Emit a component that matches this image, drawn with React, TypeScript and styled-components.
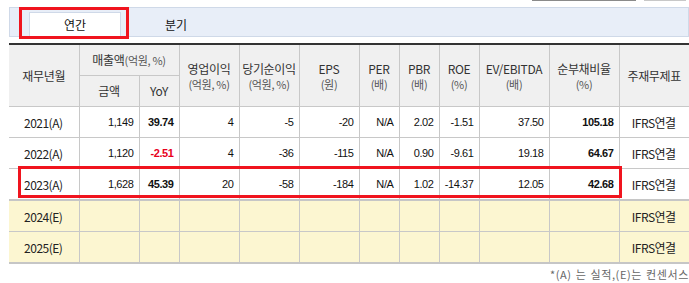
import React from "react";
import styled, { createGlobalStyle } from "styled-components";

const Global = createGlobalStyle`
  html, body { margin: 0; padding: 0; background: #fff; }
  body { font-family: "Noto Sans CJK KR", "Liberation Sans", sans-serif; color: #222; }
`;

const Page = styled.div`
  width: 689px;
  height: 283px;
  overflow: hidden;
  padding-left: 9px;
  box-sizing: border-box;
`;

const TopStrip = styled.div`
  height: 7px;
  display: flex;
  align-items: flex-start;
`;

const Stub = styled.div<{ $left: number; $width: number; $dark?: boolean }>`
  margin-left: ${(p) => p.$left}px;
  width: ${(p) => p.$width}px;
  height: 1px;
  box-sizing: border-box;
  border: 1px solid ${(p) => (p.$dark ? "#8a8a8a" : "#c8c8c8")};
  border-top: none;
  background: #f4f4f4;
`;

const TabBar = styled.div`
  width: 680px;
  height: 30px;
  box-sizing: border-box;
  background: #e8eef8;
  border: 1px solid #cfd9e8;
  display: flex;
  align-items: flex-end;
  padding-left: 19px;
`;

const Tab = styled.div<{ $active?: boolean }>`
  position: relative;
  width: 92px;
  height: 24px;
  box-sizing: border-box;
  display: flex;
  align-items: center;
  justify-content: center;
  font-size: 12px;
  color: #111;
  background: ${(p) => (p.$active ? "#fff" : "transparent")};
  border: 1px solid ${(p) => (p.$active ? "#cfd9e8" : "transparent")};
  border-bottom: none;
  margin-right: 9px;
`;

const Highlight = styled.div`
  position: absolute;
  pointer-events: none;
  border: 3px solid #f0141e;
  box-sizing: border-box;
`;

const TableWrap = styled.div`
  position: relative;
  margin-top: 6px;
  width: 680px;
`;

const Table = styled.table`
  border-collapse: collapse;
  table-layout: fixed;
  width: 680px;
  border-top: 2px solid #333;
  border-bottom: 2px solid #c6c6c6;
`;

const Th = styled.th`
  background: #f0f0f0;
  border: 1px solid #c8c8c8;
  font-weight: normal;
  font-size: 12px;
  color: #333;
  height: 30px;
  padding: 0;
  line-height: 16px;
  letter-spacing: -0.3px;
  &:first-child { border-left: none; }
  &:last-child { border-right: none; }
`;

const Sub = styled.span<{ $inline?: boolean }>`
  display: ${(p) => (p.$inline ? "inline" : "block")};
  font-size: 11px;
  line-height: 14px;
  color: #555;
`;

const Tr = styled.tr<{ $estimate?: boolean; $thick?: boolean }>`
  background: ${(p) => (p.$estimate ? "#fcf6d1" : "#fff")};
  border-top: ${(p) => (p.$thick ? "2px solid #c6c6c6" : "none")};
`;

const Td = styled.td<{ $align?: "left" | "center" | "right"; $bold?: boolean; $red?: boolean }>`
  border: 1px solid #c8c8c8;
  height: 30px;
  padding: 0 5px 0 4px;
  font-family: "Liberation Sans", "Noto Sans CJK KR", sans-serif;
  font-size: 11px;
  letter-spacing: -0.4px;
  text-align: ${(p) => p.$align ?? "right"};
  font-weight: ${(p) => (p.$bold ? "bold" : "normal")};
  color: ${(p) => (p.$red ? "#e8001c" : "#111")};
  white-space: nowrap;
  &:first-child { border-left: none; }
  &:last-child { border-right: none; }
`;

const Label = styled.span`
  font-family: "Noto Sans CJK KR", "Liberation Sans", sans-serif;
  font-size: 12px;
  letter-spacing: -0.5px;
  color: #222;
`;

const Note = styled.div`
  width: 680px;
  text-align: right;
  font-size: 11px;
  color: #666;
  margin-top: 2px;
  letter-spacing: 0.6px;
  word-spacing: 1px;
`;

type Row = {
  year: string;
  est?: boolean;
  v?: string[];
};

const rows: Row[] = [
  { year: "2021(A)", v: ["1,149", "39.74", "4", "-5", "-20", "N/A", "2.02", "-1.51", "37.50", "105.18"] },
  { year: "2022(A)", v: ["1,120", "-2.51", "4", "-36", "-115", "N/A", "0.90", "-9.61", "19.18", "64.67"] },
  { year: "2023(A)", v: ["1,628", "45.39", "20", "-58", "-184", "N/A", "1.02", "-14.37", "12.05", "42.68"] },
  { year: "2024(E)", est: true },
  { year: "2025(E)", est: true },
];

const widths = [70, 60, 40, 60, 60, 60, 40, 40, 40, 70, 70, 70];

export default function App() {
  return (
    <Page>
      <Global />
      <TopStrip>
        <Stub $left={523} $width={104} $dark />
        <Stub $left={8} $width={42} />
      </TopStrip>
      <TabBar>
        <Tab $active>
          연간
          <Highlight style={{ left: -11, top: -6, width: 110, height: 32 }} />
        </Tab>
        <Tab>분기</Tab>
      </TabBar>
      <TableWrap>
        <Table>
          <colgroup>
            {widths.map((w, i) => (
              <col key={i} style={{ width: w }} />
            ))}
          </colgroup>
          <thead>
            <tr>
              <Th rowSpan={2}>재무년월</Th>
              <Th colSpan={2}>
                매출액<Sub $inline>(억원, %)</Sub>
              </Th>
              <Th rowSpan={2}>
                영업이익<Sub>(억원, %)</Sub>
              </Th>
              <Th rowSpan={2}>
                당기순이익<Sub>(억원, %)</Sub>
              </Th>
              <Th rowSpan={2}>
                EPS<Sub>(원)</Sub>
              </Th>
              <Th rowSpan={2}>
                PER<Sub>(배)</Sub>
              </Th>
              <Th rowSpan={2}>
                PBR<Sub>(배)</Sub>
              </Th>
              <Th rowSpan={2}>
                ROE<Sub>(%)</Sub>
              </Th>
              <Th rowSpan={2}>
                EV/EBITDA<Sub>(배)</Sub>
              </Th>
              <Th rowSpan={2}>
                순부채비율<Sub>(%)</Sub>
              </Th>
              <Th rowSpan={2}>주재무제표</Th>
            </tr>
            <tr>
              <Th>금액</Th>
              <Th>YoY</Th>
            </tr>
          </thead>
          <tbody>
            {rows.map((r, i) => (
              <Tr key={r.year} $estimate={r.est} $thick={i === 3}>
                <Td $align="center">
                  <Label>{r.year}</Label>
                </Td>
                {Array.from({ length: 10 }).map((_, j) => {
                  const val = r.v ? r.v[j] : "";
                  return (
                    <Td
                      key={j}
                      $bold={j === 1 || j === 9}
                      $red={j === 1 && val.startsWith("-")}
                    >
                      {val}
                    </Td>
                  );
                })}
                <Td $align="center">
                  <Label>IFRS연결</Label>
                </Td>
              </Tr>
            ))}
          </tbody>
        </Table>
        <Highlight style={{ left: 9, top: 123, width: 604, height: 32 }} />
      </TableWrap>
      <Note>*(A) 는 실적,(E)는 컨센서스</Note>
    </Page>
  );
}
